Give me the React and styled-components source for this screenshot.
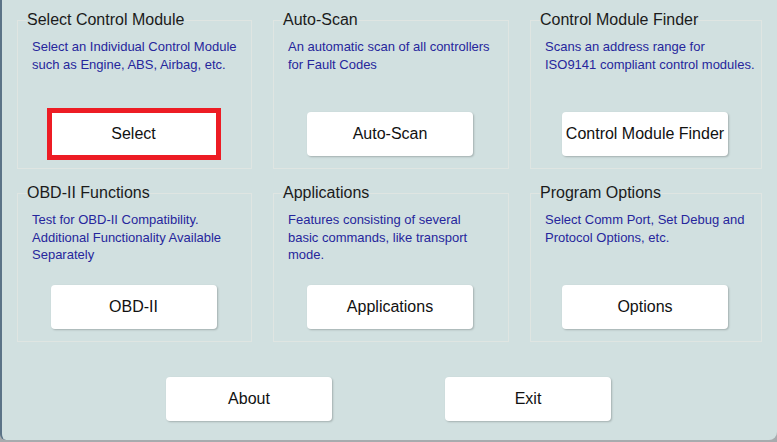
import styled, { createGlobalStyle } from "styled-components";

const GlobalStyle = createGlobalStyle`
  html, body {
    margin: 0;
    padding: 0;
    background: #a7abae;
  }
  body {
    font-family: "Liberation Sans", Arial, sans-serif;
  }
`;

const Window = styled.main`
  box-sizing: border-box;
  width: 777px;
  height: 440px;
  padding: 11px 13px 0 15px;
  background: #d1e0e0;
  border-left: 2px solid #5b7387;
  border-bottom-left-radius: 6px;
  border-bottom-right-radius: 8px;
  overflow: hidden;
`;

const Grid = styled.div`
  display: grid;
  grid-template-columns: 235px 236px 232px;
  column-gap: 21px;
  row-gap: 15px;
`;

const Group = styled.fieldset`
  margin: 0;
  min-width: 0;
  padding: 9px 0 12px 14px;
  border: 1px solid #dfe5e2;
  display: flex;
  flex-direction: column;
`;

const Title = styled.legend`
  margin-left: -5px;
  padding: 0;
  font-size: 16px;
  line-height: 18px;
  color: #1b1b1b;
`;

const Description = styled.p`
  margin: 0 0 20px;
  height: 54px;
  font-size: 13px;
  line-height: 17.5px;
  color: #26269c;
  white-space: pre-line;
`;

const Button = styled.button`
  box-sizing: border-box;
  width: 166px;
  height: 44px;
  padding: 0;
  border: none;
  border-radius: ${(p) => (p.$selected ? "0" : "4px")};
  background: #ffffff;
  box-shadow: ${(p) =>
    p.$selected ? "none" : "1px 1px 2px rgba(0, 0, 0, 0.22)"};
  outline: ${(p) => (p.$selected ? "5px solid #ed1c24" : "none")};
  outline-offset: -1px;
  font-family: "Liberation Sans", Arial, sans-serif;
  font-size: 16px;
  color: #111111;
  cursor: pointer;
`;

const GroupButton = styled(Button)`
  align-self: center;
  margin-left: -16px;
`;

const Footer = styled.div`
  display: flex;
  justify-content: center;
  gap: 113px;
  margin-top: 35px;
  padding-right: 4px;
`;

const groups = [
  {
    title: "Select Control Module",
    text: "Select an Individual Control Module\nsuch as Engine, ABS, Airbag, etc.",
    button: "Select",
    selected: true,
  },
  {
    title: "Auto-Scan",
    text: "An automatic scan of all controllers\nfor Fault Codes",
    button: "Auto-Scan",
  },
  {
    title: "Control Module Finder",
    text: "Scans an address range for\nISO9141 compliant control modules.",
    button: "Control Module Finder",
  },
  {
    title: "OBD-II Functions",
    text: "Test for OBD-II Compatibility.\nAdditional Functionality Available\nSeparately",
    button: "OBD-II",
  },
  {
    title: "Applications",
    text: "Features consisting of several\nbasic commands, like transport\nmode.",
    button: "Applications",
  },
  {
    title: "Program Options",
    text: "Select Comm Port, Set Debug and\nProtocol Options, etc.",
    button: "Options",
  },
];

export default function App() {
  return (
    <>
      <GlobalStyle />
      <Window>
        <Grid>
          {groups.map((g) => (
            <Group key={g.title}>
              <Title>{g.title}</Title>
              <Description>{g.text}</Description>
              <GroupButton $selected={g.selected}>{g.button}</GroupButton>
            </Group>
          ))}
        </Grid>
        <Footer>
          <Button>About</Button>
          <Button>Exit</Button>
        </Footer>
      </Window>
    </>
  );
}
